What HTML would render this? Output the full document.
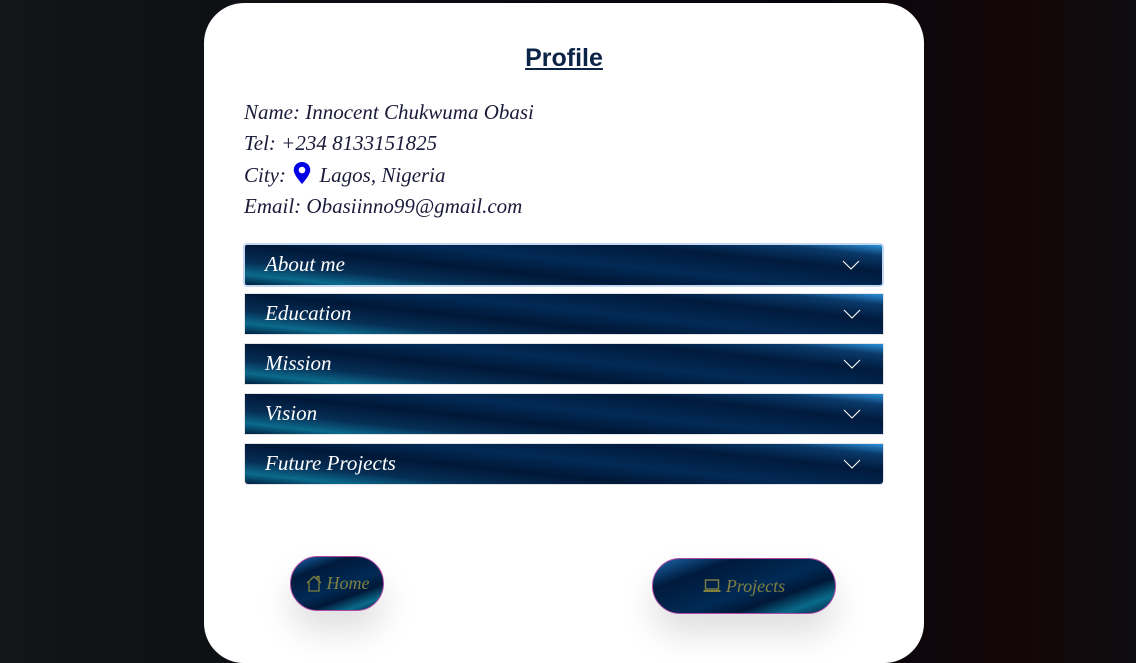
<!DOCTYPE html>
<html><head><style>
html,body{margin:0;padding:0;width:1136px;height:663px;overflow:hidden;}
body{background:linear-gradient(90deg,#121617 0%,#0a0a10 40%,#05050c 70%,#140608 90%,#0d0d0f 100%);position:relative;font-family:"Liberation Serif",serif;}
.card{position:absolute;left:204px;top:3px;width:720px;height:660px;background:#fff;border-radius:40px;}
h1{position:absolute;left:0;width:100%;top:41px;margin:0;text-align:center;font-family:"Liberation Sans",sans-serif;font-weight:bold;font-size:25px;color:#0a2347;text-decoration:underline;}
.info{position:absolute;left:40px;top:94px;font-style:italic;font-size:21px;line-height:31.4px;color:#1b1b3a;}
.acc{position:absolute;left:40px;width:640px;}
.item{position:relative;height:40px;margin-bottom:8px;border:1px solid #e4e4e8;
background:linear-gradient(186deg,#2a90d8 0%,#0a3a6a 10%,#001a3c 25%,#022a55 45%,#001838 62%,#062e55 78%,#0b6a8c 90%,#00203f 100%);}
.item span{position:absolute;left:20px;top:7px;color:#fff;font-style:italic;font-size:21px;}
.item svg{position:absolute;right:22px;top:15px;}
.b{position:absolute;border:1px solid #b04aa8;border-radius:30px;box-shadow:0 20px 34px rgba(0,0,0,0.13);
background:linear-gradient(160deg,#1a6ab0 0%,#001a3c 25%,#002a55 55%,#001838 70%,#0a6a8a 85%,#001a3c 100%);
color:#7f8040;font-style:italic;font-size:18px;display:flex;align-items:center;justify-content:center;}
</style></head><body>
<div class="card">
<h1>Profile</h1>
<div class="info">
<div>Name: Innocent Chukwuma Obasi</div>
<div>Tel: +234 8133151825</div>
<div>City: <svg width="18" height="22" viewBox="0 0 16 20" style="vertical-align:-2px;margin:0 3px 0 2px"><path d="M8 0C3.6 0 0.5 3.2 0.5 7.3 0.5 12 8 20 8 20s7.5-8 7.5-12.7C15.5 3.2 12.4 0 8 0z" fill="#0000e6"/><circle cx="8" cy="7.3" r="3" fill="#fff"/></svg> Lagos, Nigeria</div>
<div>Email: Obasiinno99@gmail.com</div>
</div>
<div class="acc" style="top:240px">
<div class="item" style="border:2px solid #c4d8f4;border-radius:4px;margin-left:-1px;margin-bottom:6px"><span>About me</span><svg width="18" height="10"><path d="M1 1l8 8 8-8" stroke="#fff" stroke-width="1.1" fill="none"/></svg></div>
<div class="item"><span>Education</span><svg width="18" height="10"><path d="M1 1l8 8 8-8" stroke="#fff" stroke-width="1.1" fill="none"/></svg></div>
<div class="item"><span>Mission</span><svg width="18" height="10"><path d="M1 1l8 8 8-8" stroke="#fff" stroke-width="1.1" fill="none"/></svg></div>
<div class="item"><span>Vision</span><svg width="18" height="10"><path d="M1 1l8 8 8-8" stroke="#fff" stroke-width="1.1" fill="none"/></svg></div>
<div class="item" style="border-radius:0 0 4px 4px"><span>Future Projects</span><svg width="18" height="10"><path d="M1 1l8 8 8-8" stroke="#fff" stroke-width="1.1" fill="none"/></svg></div>
</div>
<div class="b" style="left:86px;top:553px;width:92px;height:53px"><svg width="18" height="17" viewBox="0 0 18 17" style="margin-right:4px"><path d="M2 8L9 1.5 16 8M4 6.5V16h10V6.5M12 4V1.5h2v4" stroke="#7f8040" stroke-width="1.3" fill="none"/></svg>Home</div>
<div class="b" style="left:448px;top:555px;width:182px;height:54px"><svg width="18" height="14" viewBox="0 0 18 14" style="margin-right:5px"><rect x="2.5" y="1" width="13" height="9" stroke="#7f8040" stroke-width="1.4" fill="none"/><rect x="0.5" y="11" width="17" height="2" fill="#7f8040"/></svg>Projects</div>
</div>
</body></html>
